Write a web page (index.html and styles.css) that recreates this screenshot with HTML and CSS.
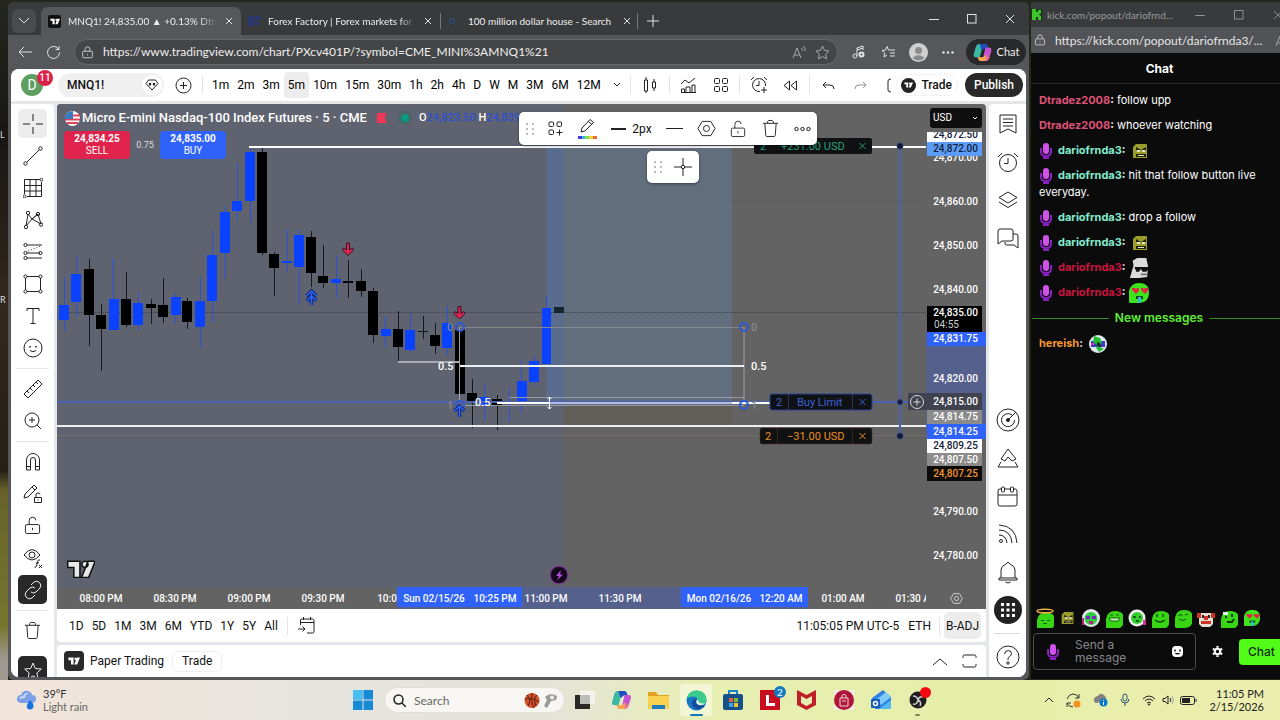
FILE: index.html
```html
<!DOCTYPE html>
<html lang="en">
<head>
<meta charset="utf-8">
<title>MNQ1! 24,835.00</title>
<link rel="stylesheet" href="styles.css">
</head>
<body>
<svg class="defs" aria-hidden="true">
  <symbol id="tv" viewBox="0 0 28 18"><path d="M1 1h12v16H7V7H1zM18 1l0 0a3 3 0 1 1-.1 0zM21 1h7l-6.500 16h-7z"/></symbol>
  <symbol id="mic" viewBox="0 0 12 16"><path d="M1 5v4q0 4 5 4t5-4V5M6 13v2M3 15h6" fill="none" stroke="#8a1fc4" stroke-width="2"/><rect x="3" y="0" width="6" height="11" rx="3" fill="#d052ea"/></symbol>
  <symbol id="lock" viewBox="0 0 16 16"><path d="M3 6.500h10a1 1 0 0 1 1 1V13a1.500 1.500 0 0 1-1.500 1.500h-9A1.500 1.500 0 0 1 2 13V7.500a1 1 0 0 1 1-1zM5 6.500V4a3 3 0 0 1 6 0v2.500M8 10v1.500"/></symbol>
  <symbol id="unlock" viewBox="0 0 18 20"><path d="M3 9h12a1.500 1.500 0 0 1 1.500 1.500V17a1.500 1.500 0 0 1-1.500 1.500H3A1.500 1.500 0 0 1 1.500 17v-6.500A1.500 1.500 0 0 1 3 9zM5.500 9V5a3.500 3.500 0 0 1 7-.5M9 12.500v2.500"/></symbol>
  <symbol id="trash" viewBox="0 0 18 20"><path d="M1 4.500h16M6 4.500v-2l1-1h4l1 1v2M3 4.500l1 13 1 1h8l1-1 1-13"/></symbol>
  <symbol id="hex" viewBox="0 0 20 20"><path d="M5.500 2.500h9L19 10l-4.500 7.500h-9L1 10z"/><circle cx="10" cy="10" r="3.200"/></symbol>
  <symbol id="copilot" viewBox="0 0 20 20"><path d="M7 1h6l2 4H9L6 15H3q-3 0-2-4l2-7q1-3 4-3z" fill="#2786dc"/><path d="M3 5q1-4 4-4h4L7 15H3q-3 0-2-4z" fill="#39b9a0"/><path d="M7 1h6q2 0 3 4h-3L9 8z" fill="#214cbf"/><path d="M13 19H7l-2-4h6l3-10h3q3 0 2 4l-2 7q-1 3-4 3z" fill="#ee6c95"/><path d="M13 5h4q3 0 2 4l-2 5-6 1z" fill="#c453d4"/><path d="M5 15h6l3-3-1 7H8q-2 0-3-4z" fill="#f9a84b"/></symbol>
  <symbol id="blob" viewBox="0 0 16 16"><path d="M0 15V7Q1 0 8 0q8 0 8 7 0 9-8 9H1z" fill="#38d514"/></symbol>
  <symbol id="grump" viewBox="0 0 16 16"><path d="M4 1h10q1 0 1 1v13H1V4z" fill="#9b9c2a"/><path d="M4 4l5 3 5-3v3H4zM4 11h10v3H4z" fill="#202614"/><path d="M5 7h3v2H5zM10 7h3v2h-3zM6 12h6v1H6z" fill="#e3e6c8"/></symbol>
  <symbol id="heart" viewBox="0 0 20 20"><path d="M0 19V8Q2 0 10 0q10 0 10 9 0 11-11 11H1z" fill="#3fe51c"/><path d="M3 5h3l1 1 1-1h2v3l-3 3-4-4zM12 5h2l1 1 1-1h3v3l-3 3-4-4z" fill="#e12643"/><path d="M7 13h7v3H7z" fill="#174a20"/><path d="M9 14h3v6H9z" fill="#33b5e8"/></symbol>
</svg>

<main class="desktop">
  <aside class="wall"><span>L</span><span>R</span></aside>

  <section class="browser" aria-label="Browser">
    <div class="tabs">
      <button class="tabmenu" aria-label="Tab actions"><svg width="12" height="12" class="ln"><path d="M1 3l5 5 5-5"/></svg></button>
      <div class="tab active"><span class="fav"><svg width="10" height="7" fill="#fff"><use href="#tv"/></svg></span><span class="ttl">MNQ1! 24,835.00 ▲ +0.13% Dtra</span><button class="x" aria-label="Close tab"><svg width="8" height="8" class="ln"><path d="M1 1l6 6M7 1L1 7"/></svg></button></div>
      <div class="tab two"><svg width="13" height="10"><path d="M0 0h6v10H0zM7 0h6v4H7zM7 6h5v3H7z" fill="#2b3770"/></svg><span class="ttl">Forex Factory | Forex markets for</span><button class="x" aria-label="Close tab"><svg width="8" height="8" class="ln"><path d="M1 1l6 6M7 1L1 7"/></svg></button></div>
      <div class="tab three"><svg width="9" height="9" fill="none" stroke="#23558f"><circle cx="4" cy="4" r="2.500"/><path d="M6 6l2 2"/></svg><span class="ttl">100 million dollar house - Search</span><button class="x" aria-label="Close tab"><svg width="8" height="8" class="ln"><path d="M1 1l6 6M7 1L1 7"/></svg></button></div>
      <button class="newtab" aria-label="New tab"><svg width="12" height="12" class="ln"><path d="M6 0v12M0 6h12"/></svg></button>
      <div class="winctl">
        <button aria-label="Minimize"><svg width="10" height="10" class="ln"><path d="M0 5.500h10"/></svg></button>
        <button aria-label="Maximize"><svg width="10" height="10" class="ln"><rect x=".5" y=".5" width="8.500" height="8.500"/></svg></button>
        <button aria-label="Close"><svg width="10" height="10" class="ln"><path d="M1 1l8 8M9 1L1 9"/></svg></button>
      </div>
    </div>

    <div class="urlbar">
      <button aria-label="Back"><svg width="14" height="12" class="ln"><path d="M14 6H1M6 1L1 6l5 5"/></svg></button>
      <button aria-label="Reload"><svg width="15" height="15" class="ln"><path d="M13.500 7.500a6 6 0 1 1-2-4.500l1.500 1.500M13 1v3.500H9.500"/></svg></button>
      <label class="addr"><svg width="13" height="13" class="ln"><use href="#lock"/></svg>
        <input aria-label="Address" value="https://www.tradingview.com/chart/PXcv401P/?symbol=CME_MINI%3AMNQ1%21">
        <svg width="14" height="13" class="ln dim"><path d="M1 12L5 2l4 10M2.500 9h5M9 2q2 1 1.500 3M11 0q3 2 2 5"/></svg>
        <svg width="15" height="15" class="ln dim"><path d="M7.500 1l2 4.300 4.500.7-3.300 3.200.8 4.600-4-2.200-4 2.200.8-4.600L1 6l4.500-.7z"/></svg>
      </label>
      <div class="ext">
        <button aria-label="Media"><svg width="13" height="14" class="ln"><path d="M5 11V3l6-2v4M5 5l6-2"/><circle cx="3" cy="11" r="2"/><circle cx="9.500" cy="9.500" r="2" stroke-width="2"/></svg></button>
        <button aria-label="Favorites"><svg width="15" height="14" class="ln"><path d="M6 10l-3 2 .7-4L1 5.500l3.500-.5L6 1.500 7.500 5H14M9 8h5M9 11h5"/></svg></button>
        <button aria-label="Profile"><svg width="19" height="19"><circle cx="9.500" cy="9.500" r="9.500" fill="#d0d0d0"/><circle cx="9.500" cy="7.500" r="3.500" fill="#8b8b8b"/><path d="M3.500 15q6-6 12 0-6 5-12 0z" fill="#8b8b8b"/></svg></button>
        <button aria-label="Settings"><svg width="13" height="3" fill="#e6e6e6"><circle cx="1.500" cy="1.500" r="1.200"/><circle cx="6" cy="1.500" r="1.200"/><circle cx="10.500" cy="1.500" r="1.200"/></svg></button>
      </div>
      <button class="copilot"><svg width="19" height="19"><use href="#copilot"/></svg>Chat</button>
    </div>

    <div class="page">
      <header class="top">
        <span class="avatar">D<b>11</b></span>
        <button class="symbol">MNQ1!<i><svg width="14" height="12" class="lk"><path d="M3.500 1h7L13 4.500 7 11 1 4.500zM4 4.500h2l-1 2zM10 4.500H8l1 2z"/></svg></i></button>
        <button class="ic compare" aria-label="Compare"><svg width="17" height="17" class="lk"><circle cx="8.500" cy="8.500" r="7.500"/><path d="M8.500 5v7M5 8.500h7"/></svg></button>
        <hr>
        <nav class="tf"><button>1m</button><button>2m</button><button>3m</button><button class="on">5m</button><button>10m</button><button>15m</button><button>30m</button><button>1h</button><button>2h</button><button>4h</button><button>D</button><button>W</button><button>M</button><button>3M</button><button>6M</button><button>12M</button></nav>
        <button class="ic chev" aria-label="More intervals"><svg width="8" height="6" class="lk"><path d="M1 1l3 3 3-3"/></svg></button>
        <hr>
        <button class="ic w38" aria-label="Chart type"><svg width="14" height="18" class="lk"><path d="M1.500 4h3v11h-3zM3 1v3M3 15v2M9.500 6h3v6h-3zM11 3v3M11 12v3"/></svg></button>
        <hr>
        <button class="ic w38" aria-label="Indicators"><svg width="17" height="17" class="lk"><path d="M1 7l4-4 4 3 6-5M1.500 15.500V12h3v3.500M6 15.500V10h4v5.500M12 15.500V8h3v7.500M1 15.500h15"/></svg></button>
        <button class="ic w26" aria-label="Layouts"><svg width="16" height="16" class="lk"><rect x="1.500" y="1.500" width="5" height="5" rx="1"/><rect x="9.500" y="1.500" width="5" height="5" rx="1"/><rect x="1.500" y="9.500" width="5" height="5" rx="1"/><rect x="9.500" y="9.500" width="5" height="5" rx="1"/></svg></button>
        <hr>
        <button class="ic w38" aria-label="Alert"><svg width="18" height="18" class="lk"><path d="M10 15.500A6.500 6.500 0 1 1 15.500 10M9 5v4.500H6M1 4l3-3M14 1l3 3M14 11v6M11 14h6"/></svg></button>
        <button class="ic w26" aria-label="Replay"><svg width="15" height="11" class="lk"><path d="M6.500 1v9L1 5.500zM13.500 1v9L8 5.500z"/></svg></button>
        <hr>
        <button class="ic w38" aria-label="Undo"><svg width="13" height="9" class="lk"><path d="M4 1L1 4l3 3M1 4h7q4 0 4 4"/></svg></button>
        <button class="ic w26 faint" aria-label="Redo"><svg width="13" height="9" class="lk"><path d="M9 1l3 3-3 3M12 4H5Q1 4 1 8"/></svg></button>
        <div class="right">
          <svg width="5" height="15" class="lk"><path d="M4 1Q1 1 1 3v9q0 2 3 2"/></svg>
          <button class="trade"><span><svg width="9" height="6" fill="#fff"><use href="#tv"/></svg></span>Trade</button>
          <button class="publish">Publish</button>
        </div>
      </header>

      <div class="work">
        <nav class="tools" aria-label="Drawing tools">
          <button class="sel" aria-label="Cross"><svg width="20" height="20" class="lk"><path d="M10 0v7M10 13v7M0 10h7M13 10h7"/></svg></button>
          <button aria-label="Trend line"><svg width="20" height="20" class="lk"><circle cx="2.500" cy="17.500" r="1.700"/><circle cx="17.500" cy="2.500" r="1.700"/><path d="M4 16L16 4"/></svg></button>
          <button aria-label="Gann"><svg width="20" height="20" class="lk"><path d="M1.500 16V1.500H17M18.500 4v14.500H4M1.500 7.500h17M1.500 13h17M7 1.500v17M13 1.500v17"/><circle cx="18.500" cy="1.500" r="1.500"/><circle cx="1.500" cy="18.500" r="1.500"/></svg></button>
          <button aria-label="Patterns"><svg width="20" height="20" class="lk"><path d="M5 4L3 16M5 4l4 5 6-5 3 10-9-5-6 7M15 4l-6 5"/><circle cx="5" cy="3" r="1.700"/><circle cx="15" cy="4" r="1.700"/><circle cx="3" cy="17" r="1.700"/><circle cx="18" cy="14.500" r="1.700"/></svg></button>
          <button aria-label="Projection"><svg width="20" height="20" class="lk"><path d="M4 3h15M4 11h13M4 16h15"/><path d="M5 9l13-5" stroke-dasharray="1 2"/><circle cx="2.500" cy="3" r="1.600"/><circle cx="2.500" cy="11" r="1.600"/><circle cx="17.500" cy="11" r="1.600"/><circle cx="2.500" cy="16" r="1.600"/></svg></button>
          <button aria-label="Shapes"><svg width="20" height="20" class="lk"><path d="M4 2.500h12M4 17.500h12M2.500 4v12M17.500 4v12"/><circle cx="2.500" cy="2.500" r="1.600"/><circle cx="17.500" cy="2.500" r="1.600"/><circle cx="2.500" cy="17.500" r="1.600"/><circle cx="17.500" cy="17.500" r="1.600"/></svg></button>
          <button aria-label="Text"><svg width="20" height="20" class="lk"><path d="M4 5V2.500h12V5M10 2.500v15M7.500 17.500h5"/></svg></button>
          <button aria-label="Emoji"><svg width="20" height="20" class="lk"><circle cx="10" cy="10" r="9"/><path d="M7 12.500q3 2.500 6 0"/><path d="M7 8v1.500M13 8v1.500" stroke-width="1.500"/></svg></button>
          <hr>
          <button aria-label="Measure"><svg width="20" height="20" class="lk"><path d="M1 15L15 1l4 4L5 19zM4 12l2 2M7 9l2.500 2.500M10 6l2 2M13 3l2 2"/></svg></button>
          <button aria-label="Zoom"><svg width="20" height="20" class="lk"><circle cx="9" cy="9" r="7"/><path d="M14 14l4 4M9 6v6M6 9h6"/></svg></button>
          <hr>
          <button aria-label="Magnet"><svg width="18" height="20" class="lk"><path d="M2.500 18V8a6.500 6.500 0 0 1 13 0v10h-4V8a2.500 2.500 0 0 0-5 0v10zM2.500 14.500h4M11.500 14.500h4"/></svg></button>
          <button aria-label="Stay in drawing mode"><svg width="20" height="20" class="lk"><path d="M1 14l1-4 9-9 3 3-9 9zM9 3l3 3M11.500 13.500h7v5h-7zM13 13.500V11q0-2 2-2t2 1.500M15 15.500v1"/></svg></button>
          <button aria-label="Lock"><svg width="17" height="19" class="lk"><use href="#unlock"/></svg></button>
          <button aria-label="Hide"><svg width="20" height="20" class="lk"><path d="M1 7q8-11 16 0-8 10-16 0z"/><circle cx="9" cy="7" r="3"/><path d="M17 12q-2-1-2.500 2l-1 4q-.5 2-2 1M13 15h3M16 17l3 3M19 17l-3 3"/></svg></button>
          <button class="dark" aria-label="Link"><svg width="20" height="20" class="lw"><path d="M8 5l3-3q3-2 5.500.5T17 8l-4 4q-2.500 2-5 0M12 15l-3 3q-3 2-5.500-.5T3 12l4-4q2.500-2 5 0"/></svg></button>
          <hr>
          <button aria-label="Remove"><svg width="17" height="19" class="lk"><use href="#trash"/></svg></button>
          <button class="dark star" aria-label="Favorites"><svg width="18" height="18" class="lw"><path d="M9 1l2.300 5.500 6 .5-4.500 4 1.400 6L9 13.800 3.800 17l1.400-6L.7 7l6-.5z"/></svg></button>
        </nav>

        <div class="center">
          <section class="chart" aria-label="Chart">
            <svg class="plot" viewBox="57 104 929 505" preserveAspectRatio="xMaxYMid slice">
              <rect x="57" y="104" width="507" height="484" fill="#5f636f"/>
              <rect x="546" y="147" width="18" height="258" fill="#5a6c8d"/>
              <rect x="564" y="147" width="168" height="258" fill="#616e7e"/>
              <rect x="564" y="405" width="168" height="22" fill="#625f5b"/>
              <path d="M57 312.500H926" stroke="#3d3f45" stroke-dasharray="1 1"/>
              <path d="M732 201.500H926" stroke="#5c5c5c"/>
              <path d="M249 147H926" stroke="#fff" stroke-width="2"/>
              <path class="wu" d="M64.500 277V332M76.500 256V317M113.500 258V329M138.500 292V330M175.500 293V324M200.500 277V348M212.500 231V322M225.500 206V279M237.500 163V220M250.500 148V223M287.500 230V272M299.500 230V304M336.500 256V298M385.500 316V347M410.500 313V352M447.500 306V356M484.500 384V421M509.500 388V421M521.500 360V414M534.500 356V386M546.500 296V364"/>
              <path class="wd" d="M89.500 259V346M101.500 304V371M126.500 272V327M151.500 299V324M163.500 278V323M187.500 298V329M262.500 148V255M274.500 252V296M311.500 231V287M323.500 245V288M348.500 260V298M361.500 269V297M373.500 288V343M398.500 311V362M423.500 316V339M418 331.500H428M435.500 323V354M472.500 379V428M497.500 395V430"/>
              <path class="bu" d="M59 305h10v15h-10zM71 274h10v28h-10zM109 299h10v31h-10zM133 303h10v22h-10zM171 297h10v18h-10zM195 301h10v26h-10zM207 255h10v46h-10zM220 212h10v41h-10zM232 201h10v10h-10zM245 152h10v49h-10zM282 261h10v2h-10zM294 235h10v32h-10zM331 279h10v4h-10zM381 329h10v7h-10zM405 330h10v20h-10zM442 323h10v25h-10zM479 397h10v8h-10zM517 381h10v20h-10zM529 361h10v21h-10zM542 308h9v56h-9z"/>
              <path class="bd" d="M84 269h10v46h-10zM96 315h10v14h-10zM121 299h10v26h-10zM146 304h10v4h-10zM158 305h10v12h-10zM182 301h10v21h-10zM257 152h10v101h-10zM269 254h10v14h-10zM306 237h10v36h-10zM318 276h10v7h-10zM343 281h10v2h-10zM356 281h10v10h-10zM368 291h10v44h-10zM393 329h10v18h-10zM430 335h10v11h-10zM455 330h10v64h-10zM467 393h10v8h-10zM492 399h10v7h-10z"/>
              <rect x="554" y="307" width="10" height="6" fill="#14252f"/>
              <path d="M459.500 327V405M744 327V405" stroke="#a3a3a3"/>
              <path d="M398 362H459" stroke="#a9abb0" stroke-width="2"/>
              <path d="M460 327.500H744" stroke="#85898c"/>
              <path d="M460 366H744" stroke="#eceff2" stroke-width="2"/>
              <path d="M509 397.500H744M460 405.500H744" stroke="#969aa6"/>
              <path d="M57 402H771M872 402H926" stroke="#4a62b4" stroke-width="2"/>
              <path d="M497 403H771" stroke="#fff" stroke-width="2"/>
              <path d="M549 403H732" stroke="#b7bce2" stroke-width="2"/>
              <path d="M57 426H926" stroke="#eee" stroke-width="2"/>
              <path d="M57 435.500H926" stroke="#847a62" stroke-dasharray="1 1"/>
              <path d="M900 147V436" stroke="#4a62b4" stroke-width="2"/>
              <g fill="#101933" stroke="#293a70"><circle cx="900" cy="146" r="3"/><circle cx="900" cy="402" r="2.500"/><circle cx="900" cy="436" r="3"/></g>
              <g fill="none" stroke="#3159d5" stroke-width="2"><circle cx="460" cy="327" r="4"/><circle cx="460" cy="405" r="4"/><circle cx="744" cy="327" r="4"/><circle cx="744" cy="405" r="4"/></g>
              <g fill="#e2234f" stroke="#351225"><path d="M346.500 243h3v7l3-2 1 2-5.500 5.500-5.500-5.500 1-2 3 2zM458 306.500h3v7l3-2 1 2-5.500 5.500L454 313.500l1-2 3 2z"/></g>
              <g fill="none" stroke="#13256b" stroke-width="3.500"><path d="M306.500 296l5-5 5 5M306.500 301l5-5 5 5M311.500 293v12M454.500 411l5-5 5 5M459.500 407v10"/></g>
              <g fill="none" stroke="#2e66ff" stroke-width="1.500"><path d="M306.500 296l5-5 5 5M306.500 301l5-5 5 5M311.500 293v12M454.500 411l5-5 5 5M459.500 407v10"/></g>
              <g class="fib"><text x="438" y="370">0.5</text><text x="751" y="370">0.5</text><text x="475" y="406">0.5</text><text x="447" y="331" class="gr">0</text><text x="751" y="331" class="gr">0</text><text x="447" y="409" class="gr">1</text><text x="751" y="409" class="gr">1</text></g>
              <path d="M549.500 397v12M547.500 399l2-2 2 2M547.500 407l2 2 2-2" fill="none" stroke="#fff"/>
              <g class="tag"><rect x="754" y="138" width="118" height="16" rx="2"/><g fill="#24a17c"><text x="760" y="150">2</text><text x="781" y="150">+231.00 USD</text></g><path d="M859.500 143l6 6M865.500 143l-6 6" stroke="#24a17c"/></g>
              <g class="tag"><rect x="770" y="394" width="102" height="16" rx="2" stroke="#25429c"/><path d="M788.500 394v16M852.500 394v16" stroke="#25335f"/><g fill="#3f62dd"><text x="776" y="406">2</text><text x="797" y="406">Buy Limit</text></g><path d="M859.500 399l6 6M865.500 399l-6 6" stroke="#3f62dd"/></g>
              <g class="tag"><rect x="760" y="428" width="112" height="16" rx="2" stroke="#4a3520" stroke-dasharray="1 1"/><path d="M777.500 428v16M852.500 428v16" stroke="#332819"/><g fill="#eb8f25"><text x="765" y="440">2</text><text x="787" y="440">−31.00 USD</text></g><path d="M859.500 433l6 6M865.500 433l-6 6" stroke="#eb8f25"/></g>
              <svg x="65" y="559" width="30" height="19" viewBox="-1 -1 30 20" fill="#e8e8ea" stroke="#111" stroke-width="1.500"><use href="#tv"/></svg>
              <circle cx="559" cy="575" r="9" fill="#27102c" stroke="#8a3ca0"/><circle cx="559" cy="575" r="7" fill="#12061a"/><path d="M561 570l-5 6h3l-2 4.500 6-6h-3z" fill="#b44be0"/>

              <g class="scale">
                <text x="978" y="161">24,870.00</text><text x="978" y="205">24,860.00</text><text x="978" y="249">24,850.00</text><text x="978" y="293">24,840.00</text>
                <rect x="926" y="332" width="60" height="99" fill="#56608c"/>
                <text x="978" y="382">24,820.00</text><text x="978" y="515">24,790.00</text><text x="978" y="559">24,780.00</text>
                <rect x="927" y="132" width="55" height="10" fill="#fff"/><text x="978" y="138" class="k">24,872.50</text>
                <rect x="927" y="104" width="55" height="28" fill="#636363"/>
                <rect x="927" y="142" width="55" height="14" fill="#5b9cf6"/><text x="978" y="152" class="k">24,872.00</text>
                <rect x="927" y="306" width="55" height="26" fill="#000"/><text x="978" y="316">24,835.00</text><text x="934" y="328" class="cd">04:55</text>
                <rect x="927" y="332" width="59" height="14" fill="#2f62fb"/><text x="978" y="342">24,831.75</text>
                <rect x="908" y="393" width="74" height="17" fill="#40434f"/><text x="978" y="405">24,815.00</text>
                <circle cx="917" cy="402" r="6.500" fill="none" stroke="#ddd"/><path d="M917 398.500v7M913.500 402h7" stroke="#ddd"/>
                <rect x="927" y="410" width="55" height="14" fill="#8b8b8b"/><text x="978" y="420">24,814.75</text>
                <rect x="927" y="424" width="59" height="15" fill="#2f62fb"/><text x="978" y="435">24,814.25</text>
                <rect x="927" y="439" width="55" height="14" fill="#fff"/><text x="978" y="449" class="k">24,809.25</text>
                <rect x="927" y="453" width="55" height="13" fill="#8b8b8b"/><text x="978" y="463">24,807.50</text>
                <rect x="927" y="466" width="55" height="15" fill="#0c0b0a"/><text x="978" y="477" class="o">24,807.25</text>
              </g>

              <rect x="57" y="588" width="929" height="21" fill="#636363"/>
              <rect x="397" y="587" width="411" height="22" fill="#56608c"/>
              <g class="time">
                <text x="101" y="602">08:00 PM</text><text x="175" y="602">08:30 PM</text><text x="249" y="602">09:00 PM</text><text x="323" y="602">09:30 PM</text><text x="387" y="602">10:0</text>
                <rect x="397" y="587" width="125" height="20" fill="#2f62fb"/><text x="434" y="602">Sun 02/15/26</text><text x="495" y="602">10:25 PM</text>
                <text x="546" y="602">11:00 PM</text><text x="620" y="602">11:30 PM</text>
                <rect x="681" y="587" width="127" height="20" fill="#2f62fb"/><text x="719" y="602">Mon 02/16/26</text><text x="781" y="602">12:20 AM</text>
                <text x="843" y="602">01:00 AM</text><text x="917" y="602">01:30 AM</text>
                <rect x="926" y="588" width="60" height="21" fill="#636363"/>
              </g>
              <svg x="950" y="592" width="13" height="13" fill="none" stroke="#ccc" stroke-width="1.500"><use href="#hex"/></svg>
            </svg>

            <div class="legend">
              <svg width="15" height="15"><circle cx="7.500" cy="7.500" r="7.500" fill="#fff"/><path d="M1 4.500h14M0 8.500h15M2 12h11" stroke="#df4356" stroke-width="2"/><path d="M0 8V6q2-6 8-6v8z" fill="#347ac2"/></svg>
              <h1>Micro E-mini Nasdaq-100 Index Futures · 5 · CME</h1>
              <svg width="10" height="10"><path d="M0 0h10L7.500 5l2.500 5H0z" fill="#f23655"/></svg>
              <svg width="14" height="14"><circle cx="7" cy="7" r="7" fill="#4a6666"/><circle cx="7" cy="7" r="4" fill="#089981"/></svg>
              <span class="ohlc">O<i>24,823.50</i> H<i>24,839</i></span>
            </div>
            <div class="quote"><button class="sell"><b>24,834.25</b>SELL</button><span>0.75</span><button class="buy"><b>24,835.00</b>BUY</button></div>
            <label class="cur"><select aria-label="Currency"><option>USD</option></select><svg width="6" height="5" fill="none" stroke="#fff"><path d="M1 1l2 2 2-2"/></svg></label>

            <div class="float draw">
              <svg width="8" height="12" fill="#bbb"><path d="M0 0h2v2H0zM6 0h2v2H6zM0 5h2v2H0zM6 5h2v2H6zM0 10h2v2H0zM6 10h2v2H6z"/></svg>
              <button aria-label="Template"><svg width="15" height="15" class="lk"><rect x="1" y="1" width="4.500" height="4.500" rx="1"/><rect x="9" y="1" width="4.500" height="4.500" rx="1"/><rect x="1" y="9" width="4.500" height="4.500" rx="1"/><path d="M11.500 8.500v6M8.500 11.500h6"/></svg></button>
              <button aria-label="Line color"><svg width="19" height="21"><path d="M3 14l1-4 8-8.500 3.500 3L7 13zM10.500 3.500L14 6.500" fill="none" stroke="#222"/><path d="M0 18h4v3H0z" fill="#4938d8"/><path d="M4 18h3v3H4z" fill="#3bb8ec"/><path d="M7 18h4v3H7z" fill="#7be24d"/><path d="M11 18h4v3h-4z" fill="#f1d636"/><path d="M15 18h4v3h-4z" fill="#f06a36"/></svg></button>
              <button class="lw2"><svg width="15" height="2"><path d="M0 1h15" stroke="#222" stroke-width="2"/></svg>2px</button>
              <button aria-label="Line style"><svg width="17" height="3" class="lk"><path d="M0 1.500h17"/></svg></button>
              <button aria-label="Settings"><svg width="19" height="19" class="lk"><use href="#hex"/></svg></button>
              <button aria-label="Lock"><svg width="16" height="18" class="lk"><use href="#unlock"/></svg></button>
              <button aria-label="Remove"><svg width="17" height="19" class="lk"><use href="#trash"/></svg></button>
              <button aria-label="More"><svg width="17" height="6" class="lk"><circle cx="2.500" cy="3" r="1.700"/><circle cx="8.500" cy="3" r="1.700"/><circle cx="14.500" cy="3" r="1.700"/></svg></button>
            </div>
            <div class="float mini">
              <svg width="8" height="12" fill="#bbb"><path d="M0 0h2v2H0zM6 0h2v2H6zM0 5h2v2H0zM6 5h2v2H6zM0 10h2v2H0zM6 10h2v2H6z"/></svg>
              <button aria-label="Cross line"><svg width="18" height="18" class="lk"><path d="M9 0v7M9 11v7M0 9h7M11 9h7"/><circle cx="9" cy="9" r="1.700"/></svg></button>
            </div>
          </section>

          <div class="ranges">
            <nav><button>1D</button><button>5D</button><button>1M</button><button>3M</button><button>6M</button><button>YTD</button><button>1Y</button><button>5Y</button><button>All</button></nav>
            <hr>
            <button class="goto" aria-label="Go to date"><svg width="17" height="17" class="lk"><path d="M2.500 8V3q0-1 1-1h11q1.500 0 1.500 1.500v11q0 1.500-1.500 1.500H9M2.500 5.500H16M5.500 0v3M12.500 0v3M0 12h7M4.500 9.500L7 12l-2.500 2.500"/></svg></button>
            <div class="clock"><button>11:05:05 PM UTC-5</button><button>ETH</button><hr><button class="adj">B-ADJ</button></div>
          </div>
          <div class="panel">
            <span class="logo"><svg width="12" height="8" fill="#fff"><use href="#tv"/></svg></span><button>Paper Trading</button><button class="tr">Trade</button>
            <div class="pctl"><button aria-label="Expand"><svg width="16" height="9" class="lk"><path d="M1 8l7-6 7 6"/></svg></button><button aria-label="Maximize"><svg width="15" height="14" class="lk"><path d="M1 4V2.500Q1 1 2.500 1h10Q14 1 14 2.500V4M1 10v1.500Q1 13 2.500 13h10q1.500 0 1.500-1.500V10"/></svg></button></div>
          </div>
        </div>

        <nav class="rail" aria-label="Widgets">
          <button aria-label="Watchlist"><svg width="18" height="20" class="lk"><path d="M1 1h16v18l-8-4-8 4zM4 5h10M4 8.500h10M4 12h10"/></svg></button>
          <button aria-label="Alerts"><svg width="22" height="22" class="lk"><circle cx="11" cy="12" r="8.500"/><path d="M11 7v5.500H7M1 6l4-4M17 2l4 4"/></svg></button>
          <button aria-label="Object tree"><svg width="20" height="18" class="lk"><path d="M10 1l9 5.500L10 12 1 6.500zM1 11l9 5.500 9-5.500"/></svg></button>
          <button aria-label="Chats"><svg width="22" height="21" class="lk"><path d="M3 1h11q2 0 2 2v8q0 2-2 2H5l-4 3V3q0-2 2-2zM16 6h3q2 0 2 2v12l-4-3H9q-1 0-1-3"/></svg></button>
          <div class="sp"></div>
          <button aria-label="Screener"><svg width="24" height="24" class="lk"><circle cx="12" cy="12" r="11"/><path d="M16 7a6.500 6.500 0 1 0 2.500 5M12 12l8-8"/><circle cx="12" cy="12" r="1.500" fill="#222"/></svg></button>
          <button aria-label="Ideas"><svg width="22" height="20" class="lk"><path d="M4 11l7-10 8 10-4 2-4-4-3 4zM4 14l-3 5h20l-3-5"/></svg></button>
          <button aria-label="Calendar"><svg width="21" height="21" class="lk"><path d="M3 3h1M8 3h5M17 3h1q2 0 2 2v13q0 2-2 2H3q-2 0-2-2V5q0-2 2-2M1 9h19"/><rect x="4.500" y="1" width="3" height="5" rx="1"/><rect x="13.500" y="1" width="3" height="5" rx="1"/></svg></button>
          <button aria-label="News"><svg width="20" height="20" class="lk"><circle cx="3" cy="17" r="1.500"/><path d="M1 11q7 0 8 8M1 6q12 0 13 13M1 1q17 1 18 18"/></svg></button>
          <button aria-label="Notifications"><svg width="20" height="23" class="lk"><path d="M1 17h18v2H1zM3 17V9q0-4 5-6l2-2 2 2q5 2 5 6v8M7.500 21q2.500 2 5 0"/></svg></button>
          <button aria-label="Products"><svg width="28" height="28"><circle cx="14" cy="14" r="14" fill="#222"/><path d="M7 7h3v3H7zM12.500 7h3v3h-3zM18 7h3v3h-3zM7 12.500h3v3H7zM12.500 12.500h3v3h-3zM18 12.500h3v3h-3zM7 18h3v3H7zM12.500 18h3v3h-3zM18 18h3v3h-3z" fill="#fff"/></svg></button>
          <hr>
          <button aria-label="Help"><svg width="24" height="24" class="lk"><circle cx="12" cy="12" r="11"/><path d="M8.500 9q.5-3.500 4-3.500 3 .2 3 3 0 2-2 3T12 15"/><circle cx="12" cy="18" r="1.200"/></svg></button>
        </nav>
      </div>
    </div>
  </section>

  <section class="kick" aria-label="Chat window">
    <div class="ktitle"><svg width="11" height="11"><path d="M0 0h11v11H0z" fill="#1b3118"/><path d="M1 0h4v3h2V1h3v3L8 5.500 10 7v4H7V8H5v3H1z" fill="#3bc62c"/></svg><span>kick.com/popout/dariofrnd...</span>
      <button aria-label="Minimize"><svg width="10" height="10" class="ln"><path d="M0 5.500h10"/></svg></button><button aria-label="Maximize"><svg width="10" height="10" class="ln"><rect x=".5" y=".5" width="8.500" height="8.500"/></svg></button><button aria-label="Close"><svg width="10" height="10" class="ln"><path d="M1 1l8 8M9 1L1 9"/></svg></button></div>
    <div class="kaddr"><svg width="12" height="12" class="ln"><use href="#lock"/></svg><span>https://kick.com/popout/dariofrnda3/...</span><svg width="12" height="12" class="ln dim"><path d="M1 12L5 2l4 10M2.500 9h5M9 2q2 1 1.500 3"/></svg></div>
    <h2>Chat</h2>
    <div class="msgs">
      <p><b class="pink">Dtradez2008</b><b>:</b> follow upp</p>
      <p><b class="pink">Dtradez2008</b><b>:</b> whoever watching</p>
      <p><svg class="m"><use href="#mic"/></svg><b class="mint">dariofrnda3</b><b>:</b> <svg class="e"><use href="#grump"/></svg></p>
      <p><svg class="m"><use href="#mic"/></svg><b class="mint">dariofrnda3</b><b>:</b> hit that follow button live everyday.</p>
      <p><svg class="m"><use href="#mic"/></svg><b class="mint">dariofrnda3</b><b>:</b> drop a follow</p>
      <p><svg class="m"><use href="#mic"/></svg><b class="mint">dariofrnda3</b><b>:</b> <svg class="e"><use href="#grump"/></svg></p>
      <p><svg class="m"><use href="#mic"/></svg><b class="red">dariofrnda3</b><b>:</b> <svg class="e big" viewBox="0 0 20 22"><path d="M0 22L4 8 3 3l5-3h10l2 9-1 12-9 1z" fill="#dcdcdc"/><path d="M5 10h15v3l-2 2h-4l-2-3-2 3H7z" fill="#111"/><path d="M12 17h7v2h-7z" fill="#777"/></svg></p>
      <p><svg class="m"><use href="#mic"/></svg><b class="red">dariofrnda3</b><b>:</b> <svg class="e big"><use href="#heart"/></svg></p>
      <div class="new"><span>New messages</span></div>
      <p><b class="orange">hereish</b><b>:</b> <svg class="e glob" viewBox="0 0 18 18"><circle cx="9" cy="9" r="9" fill="#dfe9ee"/><path d="M2 6h14v6H2z" fill="#3b35cc"/><path d="M5 1l6 2 2 5-4 3-5-4zM6 11l5 1 4 2-5 3z" fill="#23bd34"/><path d="M8 7l3 1 1 4-4-1z" fill="#13301a"/><path d="M2 8h3v2H2z" fill="#d63bc0"/></svg></p>
    </div>
    <div class="emotes">
      <svg viewBox="0 0 18 19"><svg x="1" y="3" width="16" height="16"><use href="#blob"/></svg><path d="M5 12h3M11 12h3M7 15h4" stroke="#176010"/><ellipse cx="9" cy="2.500" rx="8" ry="1.800" fill="none" stroke="#f0b24a" stroke-width="1.500"/></svg>
      <svg viewBox="-2 -3 20 21"><use href="#grump" width="15" height="15"/></svg>
      <svg viewBox="0 0 18 18"><circle cx="9" cy="9" r="9" fill="#e8e8ee"/><circle cx="9" cy="9.500" r="6.500" fill="#2bce3c"/><path d="M4 7h4v3H4zM10 7h4v3h-4z" fill="#7a27c2"/><path d="M7 12h4v3H7zM0 9h2v7H0z" fill="#be2089"/></svg>
      <svg viewBox="0 0 18 18"><svg x="1" y="1" width="16" height="16"><use href="#blob"/></svg><path d="M5 6h3M11 6h3" stroke="#176010"/><path d="M4 9h11l-2 3H6z" fill="#c8f5bc" stroke="#176010"/></svg>
      <svg viewBox="0 0 18 18"><circle cx="9" cy="9" r="8.500" fill="#f0f0f0"/><circle cx="9" cy="9" r="6" fill="#34cd2e"/><path d="M5 8h3M11 8h2M8 12h3" stroke="#0e4015" stroke-width="1.500"/><path d="M15 11h3v5h-3z" fill="#d03297"/></svg>
      <svg viewBox="0 0 18 18"><svg x="1" y="1" width="16" height="16"><use href="#blob"/></svg><path d="M6 5v3M12 5v3M4 11q5 4 10 0" stroke="#105010" fill="none" stroke-width="1.500"/></svg>
      <svg viewBox="0 0 18 18"><svg x="1" y="0" width="15" height="17"><use href="#blob"/></svg><path d="M4 7l3-2 1 2M11 6l3-1M5 10q4 3 7 0" stroke="#105010" fill="none"/></svg>
      <svg viewBox="0 0 18 18"><path d="M2 4h14v11l-3 3H5l-3-3z" fill="#e6ded2"/><path d="M0 4h4v5H0zM14 4h4v5h-4zM7 7h4v4H7zM4 12h10v3H4z" fill="#ce3325"/><path d="M5 6h2v3H5zM11 6h2v3h-2z" fill="#222"/></svg>
      <svg viewBox="0 0 18 18"><svg x="1" y="1" width="16" height="16"><use href="#blob"/></svg><path d="M3 3h5v3H3z" fill="#def5e4"/><path d="M6 7v2M12 5v3M7 13h5l2-3" stroke="#083b10" stroke-width="2" fill="none"/></svg>
      <svg viewBox="-1 -1 20 20"><use href="#heart" width="18" height="18"/></svg>
    </div>
    <form class="send"><label><svg width="12" height="18"><use href="#mic"/></svg><textarea aria-label="Message" placeholder="Send a message" rows="2"></textarea><svg width="11" height="11"><rect width="11" height="11" rx="4" fill="#fff"/><path d="M3 3.500v2M8 3.500v2" stroke="#111" stroke-width="1.500"/><path d="M2.500 7h6q-3 3-6 0z" fill="#111"/></svg></label>
      <button type="button" class="gear" aria-label="Chat settings"><svg width="11" height="11" viewBox="0 0 12 12" fill="none" stroke="#fff"><circle cx="6" cy="6" r="3" stroke-width="2.200"/><path d="M6 0v2M6 10v2M1 3l1.500 1M9.500 8l1.500 1M1 9l1.500-1M9.500 4L11 3" stroke-width="2.400"/></svg></button><button type="button" class="go">Chat</button></form>
  </section>
</main>

<footer class="taskbar">
  <div class="weather"><svg width="21" height="20"><path d="M5 13Q0 12 1 8q1-3 4-3 2-5 7-4 4 1 4 4 4 0 4 4t-5 4z" fill="#7d9fe8"/><path d="M3 9q1-3 4-3 2-4 6-3-4 1-4 5z" fill="#c3d7fa"/><path d="M14 10q5 5 3 8-3 3-6 0-1-3 3-8z" fill="#1672dc"/></svg><p>39°F<small>Light rain</small></p></div>
  <div class="apps">
    <button aria-label="Start"><svg width="20" height="20"><path d="M0 0h9.500v9.500H0zM10.500 0H20v9.500h-9.500zM0 10.500h9.500V20H0zM10.500 10.500H20V20h-9.500z" fill="#168ad4"/><path d="M0 0h9.500v9.500H0z" fill="#48bdf0"/></svg></button>
    <label class="search"><svg width="13" height="13" fill="none" stroke="#222" stroke-width="1.500"><circle cx="5.500" cy="5.500" r="4.500"/><path d="M9 9l4 4"/></svg><input type="search" aria-label="Search" placeholder="Search"><svg width="34" height="17"><circle cx="8" cy="8.500" r="7.500" fill="#d2502a"/><path d="M1 7q7-2 14 3M8 1q-2 7 2 15M3 3q5 5 1 11M13 3q-4 3-1 11" fill="none" stroke="#5a1f16"/><path d="M21 5q5-5 12-1l-1 4-5 1-4 7-3-2 3-6z" fill="#999"/><circle cx="28" cy="5.500" r="2" fill="#eee"/></svg></label>
    <button aria-label="Task view"><svg width="20" height="20"><path d="M0 5h15v14H0z" fill="#292929"/><path d="M5 1h15v13H5z" fill="#f4f4ec"/><path d="M5 5h10v9H5z" fill="#bdbdb9"/></svg></button>
    <button aria-label="Copilot"><svg width="21" height="20"><use href="#copilot"/></svg></button>
    <button aria-label="Files"><svg width="21" height="19"><path d="M0 1h8l2 3h11v14H0z" fill="#e3a21e"/><path d="M0 5h21v13H0z" fill="#fad051"/><path d="M4 14h13v4H4z" fill="#1c7abf"/></svg></button>
    <button class="cur-app" aria-label="Edge"><svg width="21" height="21"><circle cx="10.500" cy="10.500" r="10" fill="#1577c5"/><path d="M1 8Q3 0 11 .5q9 .5 9.500 9 0 5-6 5-4-1-2-4-1-4-6-4Q3 7 1 8z" fill="#3dcb8d"/><path d="M12 9q-4 6 7 7-8 7-13-1-1-6 6-6z" fill="#164b9a"/><path d="M12 9q0 6 8 4-5 4-9 1-2-3 1-5z" fill="#eaf7ec"/></svg></button>
    <button aria-label="Store"><svg width="20" height="20"><path d="M6 4V1h8v3" fill="none" stroke="#1587c9" stroke-width="2"/><rect x="0" y="4" width="20" height="16" rx="2" fill="#155089"/><path d="M6 8h4v4H6z" fill="#ee5937"/><path d="M11 8h4v4h-4z" fill="#77ba40"/><path d="M6 13h4v4H6z" fill="#35a8e4"/><path d="M11 13h4v4h-4z" fill="#f7c333"/></svg></button>
    <button class="badge" aria-label="Lenovo"><svg width="20" height="20"><path d="M0 0h20v20H0z" fill="#c90d20"/><path d="M6 5h3v8h6v3H6z" fill="#fff"/></svg><b>2</b></button>
    <button aria-label="McAfee"><svg width="19" height="20"><path d="M0 0l9.500 5L19 0v15l-9.500 5L0 15zM4 6v7l5.500 3 5.500-3V6L9.500 9z" fill="#c01e28" fill-rule="evenodd"/></svg></button>
    <button aria-label="Shopping"><svg width="20" height="20"><path d="M0 0h20v20H0z" fill="#f8ece8"/><circle cx="10" cy="10" r="10" fill="#ae1735"/><path d="M6 8h8v8H6zM8 8V5.500q2-2.500 4 0V8M8 11h4" fill="none" stroke="#f6cfd5"/></svg></button>
    <button aria-label="Outlook"><svg width="20" height="20"><path d="M1 8l11-8 8 7v12H4z" fill="#2d81e5"/><path d="M6 9l9-7 5 5-10 8z" fill="#80cafa"/><path d="M8 19l12-9v9z" fill="#54b9ee"/><rect x="0" y="9" width="9" height="9" rx="1" fill="#165cbd"/><circle cx="4.500" cy="13.500" r="2" fill="none" stroke="#fff" stroke-width="1.500"/></svg></button>
    <button class="badge obs" aria-label="OBS"><svg width="18" height="20"><circle cx="9" cy="10" r="8.500" fill="#1e1d20"/><path d="M4 6q4 0 5 4 1-4 5-3M9 10q-1 5-5 4M9 10q4 2 2 6" fill="none" stroke="#ccc" stroke-width="1.500"/></svg><i></i></button>
  </div>
  <div class="tray">
    <svg width="10" height="6" class="lk"><path d="M1 5l4-4 4 4"/></svg>
    <svg width="15" height="15"><path d="M1 6q2-5 6-5t6 4V1M13 5H9M1 14v-4h4M1 10q2 4 6 4" fill="none" stroke="#333"/><circle cx="11" cy="11" r="3.500" fill="#f4921e"/></svg>
    <svg width="15" height="14"><path d="M3 10Q0 9 1 6t4-3q2-4 6-1 3 2 2 6z" fill="#85827f"/><circle cx="10.500" cy="9.500" r="4" fill="#087ace"/><path d="M10.500 9v3M10.500 7v1" stroke="#fff"/></svg>
    <svg width="10" height="14" fill="none" stroke="#2d5573"><rect x="3" y="1" width="4" height="7" rx="2"/><path d="M1 6q0 4 4 4t4-4M5 10v3"/></svg>
    <div class="net"><svg width="14" height="11" fill="none" stroke="#222"><path d="M1 4q6-6 12 0M3 6q4-4 8 0M5 8q2-2 4 0"/><circle cx="7" cy="9.500" r=".7"/></svg>
    <svg width="12" height="10" fill="none" stroke="#222"><path d="M1 3.500h2L6 1v8L3 6.500H1zM8 3q2 2 0 4"/><path d="M10 1q3 4 0 8" stroke="#aaa"/></svg>
    <svg width="17" height="9"><rect x=".5" y=".5" width="14" height="8" rx="2" fill="none" stroke="#222"/><path d="M2 2h8v5H2zM15.500 3h1v3h-1z" fill="#222"/></svg></div>
    <time>11:05 PM<br>2/15/2026</time>
  </div>
</footer>
</body>
</html>
```
FILE: styles.css
```css
* { box-sizing: border-box; }
body { margin: 0; height: 100vh; display: flex; flex-direction: column; font: 12px/16px Lato, "Open Sans", sans-serif; overflow: hidden; color: #111; }
button, input, select, textarea { font: inherit; color: inherit; background: none; border: 0; padding: 0; margin: 0; outline: 0; }
button { display: flex; align-items: center; justify-content: center; flex: none; white-space: nowrap; }
svg { flex: none; display: block; }
p, h1, h2 { margin: 0; font-size: inherit; }
i { font-style: normal; }
.defs { position: absolute; width: 0; height: 0; }
.ln { fill: none; stroke: #e2e2e2; }
.ln.dim { stroke: #a8a8a8; }
.lk { fill: none; stroke: #222; }
.lw { fill: none; stroke: #eee; }

.desktop { flex: 1; min-height: 0; display: flex; padding-top: 2px; background: #252819; }
.wall { width: 8px; display: flex; flex-direction: column; justify-content: space-between; padding: 125px 0 372px; color: #ddd; font-size: 9px; background: linear-gradient(#252620, #191612 20%, #32281d 45%, #251f15 69%, #66622a 72%, #77762e 92%, #a09991 97%); }

.browser { flex: 1; min-width: 0; display: flex; flex-direction: column; padding: 0 3px 3px; background: #56575a; margin-right: 2px; border-radius: 6px; overflow: hidden; }
.tabs { height: 33px; margin: 0 -3px; padding: 5px 0 0 4px; display: flex; background: #393a3c; color: #eee; }
.tabmenu { width: 24px; height: 24px; margin: 2px 5px 0 0; background: #4a4b4d; border-radius: 6px; }
.tab { display: flex; align-items: center; gap: 7px; padding: 0 7px; height: 28px; }
.tab.active { width: 200px; background: #56575a; border-radius: 7px 7px 0 0; }
.tab.two { width: 199px; }
.tab.three { width: 198px; gap: 11px; border-left: 1px solid #77787a; border-right: 1px solid #77787a; height: 16px; margin-top: 6px; padding-right: 5px; }
.fav { width: 13px; height: 13px; flex: none; display: flex; align-items: center; justify-content: center; background: #111; border-radius: 2px; }
.ttl { flex: 1; min-width: 0; overflow: hidden; white-space: nowrap; font-size: 10px; }
.two .ttl, .active .ttl { -webkit-mask-image: linear-gradient(90deg, #000 88%, transparent); mask-image: linear-gradient(90deg, #000 88%, transparent); }
.x { width: 10px; height: 16px; }
.newtab { width: 30px; }
.winctl { margin-left: auto; display: flex; height: 24px; }
.winctl button { width: 38px; }
.urlbar { height: 34px; display: flex; align-items: center; color: #eee; }
.urlbar > button { width: 28px; }
.addr { flex: 1; height: 26px; margin: 0 5px 0 7px; padding: 0 7px 0 6px; border: 1px solid #66676a; border-radius: 13px; background: #444547; display: flex; align-items: center; gap: 9px; }
.addr input { flex: 1; min-width: 0; }
.ext { display: flex; margin-right: 3px; }
.ext button { width: 30px; }
.urlbar > .copilot { width: 60px; height: 26px; gap: 5px; border-radius: 13px; background: #28292b; font-size: 11px; }

.page { flex: 1; min-height: 0; display: flex; flex-direction: column; gap: 3px; background: #e5e6ea; border-radius: 8px; overflow: hidden; font-family: Roboto, "Open Sans", sans-serif; }
.top { height: 32px; background: #fff; display: flex; align-items: center; padding: 0 3px 0 10px; }
.top hr, .ranges hr { width: 1px; height: 18px; margin: 0; border: 0; background: #e3e3e6; flex: none; }
.avatar { position: relative; flex: none; width: 22px; height: 22px; border-radius: 11px; background: #5d9e61; color: #fff; font-size: 14px; line-height: 22px; text-align: center; }
.avatar b { position: absolute; left: 16px; top: -4px; width: 16px; height: 16px; border-radius: 8px; background: #dc2148; font-size: 10px; line-height: 16px; font-weight: 500; }
.symbol { width: 106px; height: 24px; margin-left: 15px; padding: 0 2px 0 9px; justify-content: space-between; border-radius: 12px; background: #f0f0f0; font-weight: 500; }
.symbol i { width: 20px; height: 20px; border-radius: 10px; background: #fff; display: flex; align-items: center; justify-content: center; }
.compare { width: 38px; }
.tf { display: flex; margin-left: 5px; flex: none; color: #000; }
.tf button { padding: 0 4px; height: 26px; border-radius: 4px; }
.tf .on { background: #ececec; }
.chev { width: 24px; margin-right: 1px; }
.w38 { width: 38px; } .w26 { width: 26px; }
.w26 + hr { margin-left: 5px; }
.faint { opacity: .5; }
.right { margin-left: auto; display: flex; align-items: center; font-weight: 500; }
.trade { height: 22px; gap: 5px; padding: 0 5px 0 4px; margin: 0 7px 0 4px; border: 1px solid #f3f3f3; border-radius: 11px; }
.trade span { width: 15px; height: 15px; border-radius: 8px; background: #222; display: flex; align-items: center; justify-content: center; }
.publish { width: 58px; height: 24px; background: #292929; color: #fff; border-radius: 12px; }

.work { flex: 1; min-height: 0; display: flex; gap: 3px; }
.tools { width: 43px; background: #fff; display: flex; flex-direction: column; align-items: center; padding-top: 5px; border-radius: 0 4px 0 0; overflow: hidden; }
.tools button { width: 29px; height: 29px; margin-bottom: 3px; border-radius: 5px; }
.tools .sel { background: #ececec; }
.tools .dark { background: #292929; }
.tools .star { margin-top: 8px; }
.tools hr { width: 33px; height: 1px; border: 0; background: #e6e6e8; margin: 3px 0 5px; flex: none; }
.center { flex: 1; min-width: 0; display: flex; flex-direction: column; }
.chart { position: relative; flex: 1; min-height: 0; background: #636363; border-radius: 4px 4px 0 0; overflow: hidden; color: #fff; }
.plot { width: 100%; height: 100%; font: 500 11px Roboto, sans-serif; fill: #fff; }
.wu { stroke: #2a51d8; } .wd { stroke: #17181b; }
.bu { fill: #0a42ff; } .bd { fill: #000; }
.scale text { text-anchor: end; }
.scale, .time { font-size: 10px; }
.scale .k { fill: #15213a; }
.scale .cd { text-anchor: start; fill: #ccc; font-weight: 400; }
.scale .o { fill: #f2952e; }
.time text { text-anchor: middle; }
.fib .gr { fill: #858891; }
.tag rect { fill: #101112; }
.tag text { font-weight: 400; }
.legend { position: absolute; left: 8px; top: 5px; display: flex; align-items: center; gap: 2px; line-height: 18px; white-space: nowrap; }
.legend h1 { font-size: 13px; font-weight: 500; margin-right: 8px; }
.legend svg + svg { margin: 0 5px 0 9px; }
.ohlc { font-size: 11px; font-weight: 500; }
.ohlc i { color: #2d4fd0; }
.quote { position: absolute; left: 7px; top: 27px; display: flex; align-items: center; font-size: 10px; color: #ddd; }
.quote span { width: 30px; text-align: center; font-size: 9px; }
.quote button { width: 66px; height: 28px; flex-direction: column; line-height: 12px; border-radius: 4px; color: #fff; }
.quote b { font-size: 10px; font-weight: 700; }
.sell { background: #e0234c; } .buy { background: #2f62fb; }
.cur { position: absolute; right: 4px; top: 4px; width: 52px; height: 20px; display: flex; align-items: center; padding: 0 4px 0 3px; background: #0f0f0f; border-radius: 3px; }
.cur select { flex: 1; appearance: none; font-size: 10px; }
.float { position: absolute; display: flex; align-items: center; background: #fff; color: #111; border-radius: 5px; box-shadow: 0 1px 3px #0006; }
.float button { width: 32px; height: 28px; }
.draw { left: 462px; top: 8px; height: 33px; width: 298px; padding: 0 0 0 7px; }
.draw button:first-of-type { margin-left: 5px; }
.draw .lw2 { width: 53px; gap: 6px; margin-left: 2px; }
.mini { left: 590px; top: 47px; width: 52px; height: 32px; padding-left: 7px; gap: 5px; }
.ranges { height: 33px; background: #fff; display: flex; align-items: center; padding: 0 5px 0 8px; border-radius: 0 0 4px 4px; }
.ranges nav { display: flex; }
.ranges nav button { padding: 0 4px; height: 26px; }
.ranges nav + hr { margin-left: 5px; }
.goto { width: 38px; }
.clock { margin-left: auto; display: flex; align-items: center; gap: 9px; }
.clock hr { margin: 0 -5px 0 -1px; }
.clock .adj { width: 37px; height: 27px; background: #ececec; border-radius: 5px; }
.panel { height: 32px; margin-top: 3px; background: #fff; border-radius: 4px 4px 0 0; display: flex; align-items: center; padding: 0 9px 0 7px; gap: 6px; }
.panel .logo { width: 20px; height: 20px; background: #292929; border-radius: 4px; display: flex; align-items: center; justify-content: center; }
.panel .tr { height: 21px; padding: 0 9px; margin-left: 2px; border: 1px solid #f0f0f0; border-radius: 5px; }
.pctl { margin-left: auto; display: flex; gap: 14px; }
.rail { width: 37px; background: #fff; border-radius: 4px 0 0 0; display: flex; flex-direction: column; align-items: center; padding: 1px 0; }
.rail button { height: 38px; }
.rail .sp { flex: 1; }
.rail hr { width: 27px; height: 1px; border: 0; margin: 4px 0; background: #ddd; flex: none; }

.kick { width: 249px; margin-bottom: 1px; background: #0b0b0c; color: #fff; display: flex; flex-direction: column; font-family: Inter, sans-serif; overflow: hidden; }
.ktitle { height: 25px; background: #393a3c; color: #9b9b9b; display: flex; align-items: center; font: 10px Lato, sans-serif; }
.ktitle span { width: 134px; margin: 0 8px 0 5px; white-space: nowrap; flex: none; }
.ktitle button { width: 22px; margin-right: 17px; opacity: .5; }
.kaddr { height: 26px; background: #525356; color: #e5e5e5; display: flex; align-items: center; gap: 9px; padding-left: 3px; font: 12px Lato, sans-serif; white-space: nowrap; }
.kaddr span { flex: none; width: 211px; }
.kick h2 { height: 31px; border-bottom: 1px solid #28292c; font-size: 12px; line-height: 31px; text-align: center; padding-left: 8px; font-weight: 700; }
.msgs { flex: 1; min-height: 0; padding: 8px 0 0 8px; font-size: 11px; }
.msgs p { padding: 0 20px 0 0; margin-bottom: 8px; line-height: 17px; }
.msgs .m, .msgs .e { display: inline-block; vertical-align: middle; }
.msgs .m { width: 12px; height: 16px; margin: -3px 6px -2px 1px; }
.msgs .e { width: 16px; height: 16px; margin: -3px 0 -3px 3px; }
.msgs .big { width: 20px; height: 20px; margin: -4px 0; }
.msgs .glob { width: 18px; height: 18px; margin: -4px 0 -4px 3px; }
.pink { color: #df5277; } .mint { color: #85ecd0; } .red { color: #c9143e; } .orange { color: #f39732; }
.new { display: flex; align-items: center; gap: 6px; margin: 0 -6px 8px -7px; color: #5fee38; font-size: 12px; font-weight: 600; line-height: 18px; }
.new::before, .new::after { content: ""; flex: 1; height: 1px; background: #318a22; }
.emotes { display: flex; gap: 5px; padding: 0 0 5px 5px; }
.emotes svg { width: 18px; height: 20px; }
.send { display: flex; padding: 0 0 9px 2px; align-items: center; height: 46px; }
.send label { width: 163px; height: 37px; flex: none; border: 1px solid #4b4c50; border-radius: 4px; display: flex; align-items: center; padding: 0 12px 0 13px; }
.send textarea { flex: 1; min-width: 0; height: 28px; margin: 0 30px 0 16px; line-height: 13px; resize: none; overflow: hidden; color: #888; }
.send textarea::placeholder { color: #85868a; }
.gear { width: 43px; }
.go { flex: 1; height: 26px; padding-left: 4px; background: #53fc18; color: #102a08; border-radius: 4px 0 0 4px; font-weight: 500; }

.taskbar { height: 40px; display: grid; grid-template-columns: 1fr auto 1fr; align-items: center; padding: 0 16px; background: linear-gradient(90deg, #f2e4da, #e6e4df 25%, #e4e4d8 43%, #e7efb4 55%, #e5eea8 75%, #eceeaf); font-size: 11px; line-height: 13px; color: #333; }
.weather { display: flex; gap: 6px; align-items: center; }
.weather small { display: block; font-size: 11px; color: #666; }
.apps { display: flex; align-items: center; }
.apps button { width: 37px; height: 32px; border-radius: 4px; position: relative; }
.apps .cur-app { background: #f3f6d4; width: 32px; margin: 0 2px 0 3px; }
.cur-app::after { content: ""; position: absolute; bottom: 0; width: 13px; height: 2px; background: #1677b8; border-radius: 1px; }
.obs::after { content: ""; position: absolute; bottom: 0; width: 5px; height: 2px; background: #83855f; border-radius: 1px; }
.search { width: 181px; height: 26px; margin: 0 1px 0 3px; background: #f7f6f2; border: 1px solid #e0dfd9; border-radius: 13px; display: flex; align-items: center; padding: 0 6px 0 8px; gap: 8px; }
.search input { flex: 1; min-width: 0; font-size: 12px; }
.search input::placeholder { color: #666; }
.badge b { position: absolute; right: 2px; top: 2px; width: 12px; height: 12px; border-radius: 6px; background: #117bc1; color: #fff; font-weight: 400; font-size: 10px; line-height: 12px; }
.badge i { position: absolute; right: 5px; top: 3px; width: 11px; height: 11px; border-radius: 6px; background: #f30a12; }
.tray { display: flex; align-items: center; justify-content: flex-end; gap: 12px; }
.net { display: flex; align-items: center; gap: 6px; }
.tray time { text-align: right; color: #222; white-space: nowrap; }
```
